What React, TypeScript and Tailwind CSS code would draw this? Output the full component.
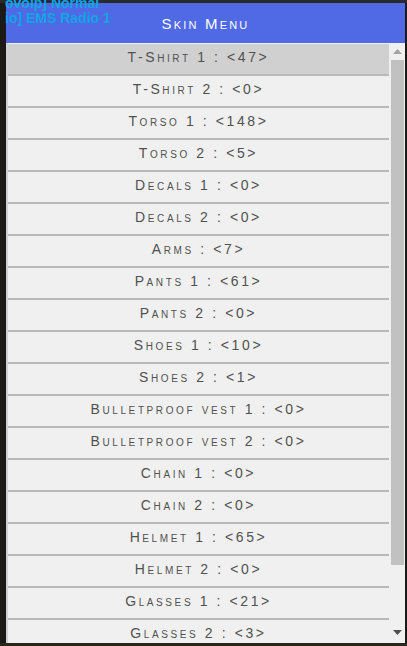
import React from "react";

const items = [
  "T-Shirt 1 : <47>",
  "T-Shirt 2 : <0>",
  "Torso 1 : <148>",
  "Torso 2 : <5>",
  "Decals 1 : <0>",
  "Decals 2 : <0>",
  "Arms : <7>",
  "Pants 1 : <61>",
  "Pants 2 : <0>",
  "Shoes 1 : <10>",
  "Shoes 2 : <1>",
  "Bulletproof vest 1 : <0>",
  "Bulletproof vest 2 : <0>",
  "Chain 1 : <0>",
  "Chain 2 : <0>",
  "Helmet 1 : <65>",
  "Helmet 2 : <0>",
  "Glasses 1 : <21>",
  "Glasses 2 : <3>",
];

export default function App() {
  return (
    <div className="relative w-[407px] h-[646px] overflow-hidden bg-[#1b1a17]">
      <div className="absolute left-0 top-0 w-[407px] h-[3px] bg-[#2a2a2a]" />
      <div className="absolute left-0 bottom-0 w-[407px] h-[3px] bg-[#2b261c]" />
      <div className="ml-[6px] mt-[3px] w-[399px] h-[640px] flex flex-col bg-[#f0f0f0]">
        <div className="h-[40px] shrink-0 bg-[#4f6ae4] flex items-center justify-center">
          <span
            className="text-white text-[15px] tracking-[2.2px] [font-variant:small-caps] pt-[2px]"
            style={{ fontFamily: '"Liberation Sans", Arial, sans-serif' }}
          >
            Skin Menu
          </span>
        </div>
        <div className="flex flex-1 min-h-0">
          <div className="flex-1 min-w-0 overflow-hidden border-l-2 border-[#d2d2d2] pt-[1px]">
            {items.map((t, i) => (
              <div
                key={t}
                className={`h-[32px] shrink-0 border-b-2 border-[#b9b9b9] flex items-center justify-center ${
                  i === 0 ? "bg-[#d0d0d0]" : "bg-[#f0f0f0]"
                }`}
              >
                <span
                  className="text-[#505050] text-[14px] tracking-[2.6px] [font-variant:small-caps] pb-[3px]"
                  style={{ fontFamily: '"Liberation Sans", Arial, sans-serif' }}
                >
                  {t}
                </span>
              </div>
            ))}
          </div>
          <div className="w-[16px] shrink-0 bg-[#f0f0f0] flex flex-col items-center relative">
            <svg width="9" height="5" viewBox="0 0 9 5" className="mt-[6px]">
              <polygon points="4.5,0 9,5 0,5" fill="#a3a3a3" />
            </svg>
            <div className="mt-[6px] w-[13px] h-[505px] bg-[#c1c1c1]" />
            <svg width="9" height="5" viewBox="0 0 9 5" className="absolute bottom-[8px]">
              <polygon points="0,0 9,0 4.5,5" fill="#505050" />
            </svg>
          </div>
        </div>
      </div>
      <div
        className="absolute left-[5px] top-[-4px] text-[#12a4e6] font-bold text-[14px] leading-[15px]"
        style={{ fontFamily: '"Liberation Sans", Arial, sans-serif' }}
      >
        <div>ovoip] Normal</div>
        <div>io] EMS Radio 1</div>
      </div>
    </div>
  );
}
